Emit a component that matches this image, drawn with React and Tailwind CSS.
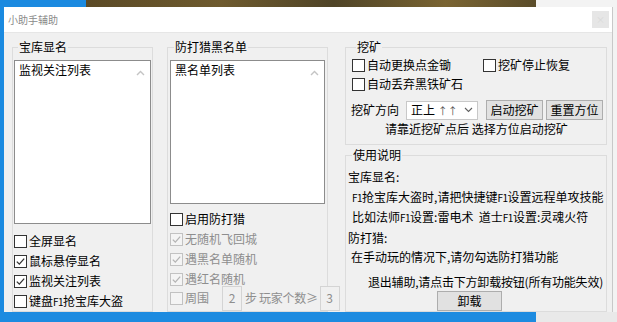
import React from 'react';

const font = { fontFamily: '"Noto Sans CJK SC", "Microsoft YaHei", sans-serif' };

// narrow latin like the original GDI font
const F1 = () => <span className="text-[10px] tracking-[-0.5px]">F1</span>;

const Box = ({ checked, disabled }) => (
  <span
    className={`w-[13px] h-[13px] border shrink-0 flex items-center justify-center mr-[2px] ${
      disabled ? 'border-[#c2c2c2] bg-[#f4f4f4]' : 'border-[#333333] bg-white'
    }`}
  >
    {checked && (
      <svg width="11" height="11" viewBox="0 0 11 11">
        <path
          d="M1.8 5.6 L4.3 8.1 L9.2 2.6"
          fill="none"
          stroke={disabled ? '#b4b4b4' : '#333333'}
          strokeWidth="1.3"
        />
      </svg>
    )}
  </span>
);

const Check = ({ label, checked, disabled, className = '' }) => (
  <div
    className={`flex items-center h-[20px] ${disabled ? 'text-[#8e8e8e]' : 'text-black'} ${className}`}
  >
    <Box checked={checked} disabled={disabled} />
    <span>{label}</span>
  </div>
);

const ListBox = ({ label, className }) => (
  <div className={`relative bg-white border border-[#8c8c8c] ${className}`}>
    <div className="pl-[4px] pt-[1px] leading-[16px]">{label}</div>
    <svg className="absolute right-[5px] top-[9px]" width="9" height="6" viewBox="0 0 9 6">
      <path d="M1 5 L4.5 1.5 L8 5" fill="none" stroke="#c4c4c4" strokeWidth="1.4" />
    </svg>
  </div>
);

const Group = ({ title, className = '', children }) => (
  <fieldset className={`min-w-0 shrink-0 border border-[#dcdcdc] ${className}`}>
    <legend className="ml-[4px] px-[1px] leading-[16px]">{title}</legend>
    {children}
  </fieldset>
);

const Btn = ({ children, className = '' }) => (
  <button className={`bg-[#e1e1e1] border border-[#adadad] leading-[16px] ${className}`}>
    {children}
  </button>
);

const NumBox = ({ v }) => (
  <span className="w-[20px] h-[25px] border border-[#d4d4d4] bg-[#f0f0f0] flex items-center justify-center text-[#8e8e8e]">
    {v}
  </span>
);

export default function App() {
  return (
    <div
      className="relative w-[617px] h-[322px] overflow-hidden bg-[#f3f3f3] text-[12px] text-black whitespace-nowrap"
      style={font}
    >
      {/* desktop behind the window */}
      <div className="absolute left-0 top-0 w-[86px] h-[8px] bg-[#1b8ae0]" />
      <div className="absolute left-[86px] top-0 w-[450px] h-[8px] bg-[linear-gradient(90deg,#5b4a26,#6e5a2e_30%,#4f4427_55%,#7a6432_80%,#5a4c2a)]" />
      <div className="absolute left-0 top-0 w-[4px] h-[322px] bg-[#1b8ae0]" />
      <div className="absolute left-0 top-[312px] w-[536px] h-[10px] bg-[#1d8be0]" />
      <div className="absolute left-[536px] top-[312px] w-[81px] h-[10px] bg-[#e9e9e9]" />

      {/* window */}
      <div className="absolute left-[4px] top-[7px] w-[609px] h-[305px] flex flex-col border-r border-[#c8c8c8] bg-[#f0f0f0] overflow-hidden">
        <div className="h-[25px] bg-white flex items-center justify-between pl-[4px] pr-[3px] shrink-0">
          <span className="text-[10px] text-[#8a8a8a]">小助手辅助</span>
          <span className="w-[17px] h-[17px] bg-[#e6e6e6] flex items-center justify-center text-[9px] text-[#d8d8d8]">×</span>
        </div>

        <div className="flex-1 flex pt-[6px] pl-[8px] pb-[1px] border-t border-[#e6e6e6]">
          {/* column 1 */}
          <Group title="宝库显名" className="w-[141px] px-[1px]">
            <ListBox label="监视关注列表" className="mt-[5px] h-[164px]" />
            <div className="mt-[7px]">
              <Check label="全屏显名" />
              <Check label="鼠标悬停显名" checked />
              <Check label="监视关注列表" checked />
              <Check label={<>键盘<F1 />抢宝库大盗</>} />
            </div>
          </Group>

          {/* column 2 */}
          <Group title="防打猎黑名单" className="ml-[14px] w-[161px] pl-[2px] pr-[2px]">
            <ListBox label="黑名单列表" className="mt-[5px] h-[144px]" />
            <div className="mt-[5px]">
              <Check label="启用防打猎" />
              <Check label="无随机飞回城" checked disabled />
              <Check label="遇黑名单随机" checked disabled />
              <Check label="遇红名随机" checked disabled />
              <div className="flex items-center h-[20px] -mt-[1px] text-[#8e8e8e]">
                <Box disabled />
                <span>周围</span>
                <span className="ml-[13px]"><NumBox v="2" /></span>
                <span className="ml-[3px] tracking-[-0.3px]">步 玩家个数≥</span>
                <span className="ml-[2px]"><NumBox v="3" /></span>
              </div>
            </div>
          </Group>

          {/* column 3 */}
          <div className="ml-[17px] w-[262px] shrink-0 flex flex-col">
            <Group title="挖矿" className="h-[106px] pl-[6px]">
              <div className="flex">
                <Check label="自动更换点金锄" className="w-[131px]" />
                <Check label="挖矿停止恢复" />
              </div>
              <Check label="自动丢弃黑铁矿石" className="-mt-[1px]" />
              <div className="mt-[5px] -ml-[1px] flex items-center h-[22px]">
                <span className="w-[48px]">挖矿方向</span>
                <div className="ml-[7px] w-[72px] h-[19px] bg-white border border-[#c8c8c8] flex items-center justify-between pl-[4px] pr-[4px]">
                  <span>正上 <span className="text-[10px] text-[#555]">↑↑</span></span>
                  <svg width="9" height="6" viewBox="0 0 9 6">
                    <path d="M1 1 L4.5 4.5 L8 1" fill="none" stroke="#606060" strokeWidth="1.1" />
                  </svg>
                </div>
                <Btn className="ml-[8px] w-[57px] h-[20px]">启动挖矿</Btn>
                <Btn className="ml-[3px] w-[57px] h-[20px]">重置方位</Btn>
              </div>
              <div className="pl-[33px] leading-[16px]">请靠近挖矿点后 选择方位启动挖矿</div>
            </Group>

            <Group title="使用说明" className="mt-[2px] flex-1 pl-[2px]">
              <div className="mt-[4px] leading-[19.5px]">
                <div>宝库显名:</div>
                <div className="pl-[4px]"><F1 />抢宝库大盗时,请把快捷键<F1 />设置远程单攻技能</div>
                <div className="pl-[4px]">比如法师<F1 />设置:雷电术&nbsp; 道士<F1 />设置:灵魂火符</div>
                <div>防打猎:</div>
                <div className="pl-[3px]">在手动玩的情况下,请勿勾选防打猎功能</div>
              </div>
              <div className="mt-[5px] pl-[20px] leading-[19px] tracking-[-0.2px]">退出辅助,请点击下方卸载按钮(所有功能失效)</div>
              <div className="flex">
                <Btn className="ml-[89px] w-[65px] h-[20px]">卸载</Btn>
              </div>
            </Group>
          </div>
        </div>
      </div>
    </div>
  );
}
